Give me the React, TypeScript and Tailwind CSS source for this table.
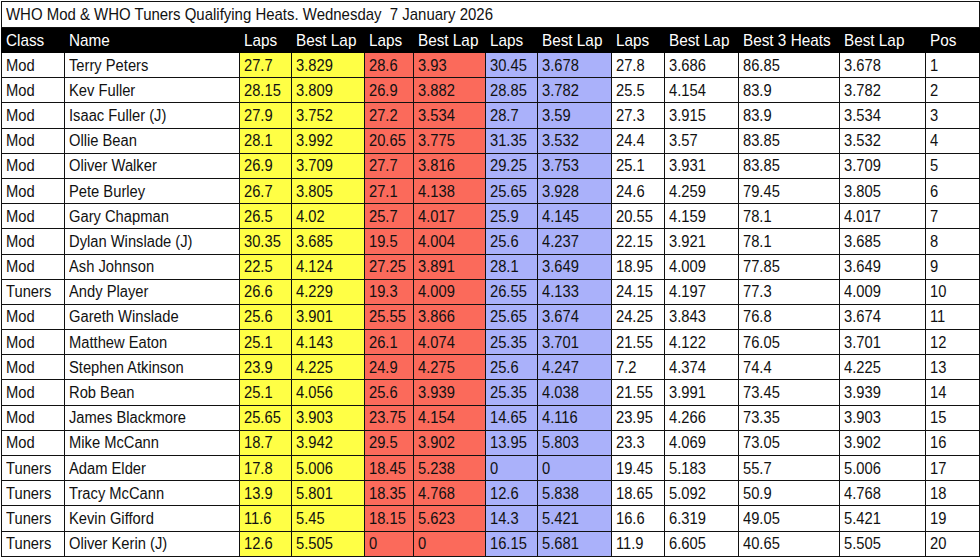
import React from "react";

const rows: string[][] = [
  ["Mod", "Terry Peters", "27.7", "3.829", "28.6", "3.93", "30.45", "3.678", "27.8", "3.686", "86.85", "3.678", "1"],
  ["Mod", "Kev Fuller", "28.15", "3.809", "26.9", "3.882", "28.85", "3.782", "25.5", "4.154", "83.9", "3.782", "2"],
  ["Mod", "Isaac Fuller (J)", "27.9", "3.752", "27.2", "3.534", "28.7", "3.59", "27.3", "3.915", "83.9", "3.534", "3"],
  ["Mod", "Ollie Bean", "28.1", "3.992", "20.65", "3.775", "31.35", "3.532", "24.4", "3.57", "83.85", "3.532", "4"],
  ["Mod", "Oliver Walker", "26.9", "3.709", "27.7", "3.816", "29.25", "3.753", "25.1", "3.931", "83.85", "3.709", "5"],
  ["Mod", "Pete Burley", "26.7", "3.805", "27.1", "4.138", "25.65", "3.928", "24.6", "4.259", "79.45", "3.805", "6"],
  ["Mod", "Gary Chapman", "26.5", "4.02", "25.7", "4.017", "25.9", "4.145", "20.55", "4.159", "78.1", "4.017", "7"],
  ["Mod", "Dylan Winslade (J)", "30.35", "3.685", "19.5", "4.004", "25.6", "4.237", "22.15", "3.921", "78.1", "3.685", "8"],
  ["Mod", "Ash Johnson", "22.5", "4.124", "27.25", "3.891", "28.1", "3.649", "18.95", "4.009", "77.85", "3.649", "9"],
  ["Tuners", "Andy Player", "26.6", "4.229", "19.3", "4.009", "26.55", "4.133", "24.15", "4.197", "77.3", "4.009", "10"],
  ["Mod", "Gareth Winslade", "25.6", "3.901", "25.55", "3.866", "25.65", "3.674", "24.25", "3.843", "76.8", "3.674", "11"],
  ["Mod", "Matthew Eaton", "25.1", "4.143", "26.1", "4.074", "25.35", "3.701", "21.55", "4.122", "76.05", "3.701", "12"],
  ["Mod", "Stephen Atkinson", "23.9", "4.225", "24.9", "4.275", "25.6", "4.247", "7.2", "4.374", "74.4", "4.225", "13"],
  ["Mod", "Rob Bean", "25.1", "4.056", "25.6", "3.939", "25.35", "4.038", "21.55", "3.991", "73.45", "3.939", "14"],
  ["Mod", "James Blackmore", "25.65", "3.903", "23.75", "4.154", "14.65", "4.116", "23.95", "4.266", "73.35", "3.903", "15"],
  ["Mod", "Mike McCann", "18.7", "3.942", "29.5", "3.902", "13.95", "5.803", "23.3", "4.069", "73.05", "3.902", "16"],
  ["Tuners", "Adam Elder", "17.8", "5.006", "18.45", "5.238", "0", "0", "19.45", "5.183", "55.7", "5.006", "17"],
  ["Tuners", "Tracy McCann", "13.9", "5.801", "18.35", "4.768", "12.6", "5.838", "18.65", "5.092", "50.9", "4.768", "18"],
  ["Tuners", "Kevin Gifford", "11.6", "5.45", "18.15", "5.623", "14.3", "5.421", "16.6", "6.319", "49.05", "5.421", "19"],
  ["Tuners", "Oliver Kerin (J)", "12.6", "5.505", "0", "0", "16.15", "5.681", "11.9", "6.605", "40.65", "5.505", "20"],
];

const headers = ["Class", "Name", "Laps", "Best Lap", "Laps", "Best Lap", "Laps", "Best Lap", "Laps", "Best Lap", "Best 3 Heats", "Best Lap", "Pos"];
const widths = [63, 175, 52, 73, 49, 72, 52, 74, 53, 74, 101, 86, 54];
const bgs = ["", "", "bg-[#ffff45]", "bg-[#ffff45]", "bg-[#fb6a5b]", "bg-[#fb6a5b]", "bg-[#aab1fa]", "bg-[#aab1fa]", "", "", "", "", ""];

export default function App() {
  return (
    <div className="w-[980px] h-[557px] overflow-hidden bg-white" style={{ fontFamily: '"Liberation Sans", Arial, sans-serif' }}>
      <table className="border-collapse table-fixed ml-px mt-px" style={{ width: 977 }}>
        <colgroup>
          {widths.map((w, i) => (
            <col key={i} style={{ width: w }} />
          ))}
        </colgroup>
        <tbody>
          <tr className="h-[26px]">
            <td colSpan={13} className="border border-[#111] bg-white px-[4px] text-[17px] leading-none text-[#111] whitespace-nowrap overflow-hidden">
              <span className="inline-block origin-left scale-x-[0.88]">WHO Mod &amp; WHO Tuners Qualifying Heats. Wednesday&nbsp; 7 January 2026</span>
            </td>
          </tr>
          <tr className="h-[25px] bg-black">
            {headers.map((h, i) => (
              <td key={i} className="border border-black px-[4px] text-[17px] leading-none text-white whitespace-nowrap overflow-visible">
                <span className="inline-block origin-left scale-x-[0.9]">{h}</span>
              </td>
            ))}
          </tr>
          {rows.map((r, ri) => (
            <tr key={ri} className="h-[25.2px]">
              {r.map((c, ci) => (
                <td key={ci} className={`border border-[#111] px-[4px] pt-[1px] text-[16px] leading-none text-[#111] whitespace-nowrap ${bgs[ci]}`}>
                  <span className="inline-block origin-left scale-x-[0.92]">{c}</span>
                </td>
              ))}
            </tr>
          ))}
        </tbody>
      </table>
    </div>
  );
}
